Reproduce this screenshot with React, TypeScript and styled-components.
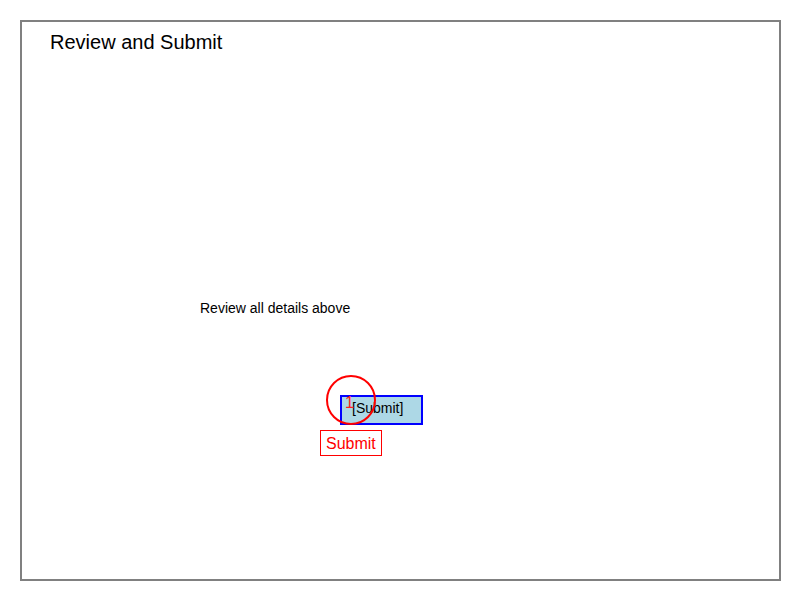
import React from "react";
import styled, { createGlobalStyle } from "styled-components";

const Global = createGlobalStyle`
  html, body { margin: 0; padding: 0; background: #ffffff; }
  body { font-family: "Liberation Sans", Arial, sans-serif; color: #000; }
`;

const Frame = styled.div`
  box-sizing: border-box;
  width: 761px;
  height: 561px;
  margin: 20px;
  border: 2px solid #808080;
  display: flex;
  flex-direction: column;
  align-items: flex-start;
`;

const Title = styled.h1`
  margin: 0;
  padding: 9px 28px 0;
  font-size: 20px;
  font-weight: normal;
  line-height: 23px;
`;

const Note = styled.p`
  margin: 246px 0 0 178px;
  font-size: 14px;
  line-height: 16px;
`;

const ActionArea = styled.div`
  margin: 79px 0 0 318px;
  position: relative;
`;

const SubmitButton = styled.button`
  box-sizing: border-box;
  width: 83px;
  height: 30px;
  padding: 0 0 4px 10px;
  border: 2px solid #0000ff;
  background: #add8e6;
  font-family: "Liberation Sans", Arial, sans-serif;
  font-size: 14px;
  color: #000;
  text-align: left;
  display: block;
`;

const Ring = styled.div`
  position: absolute;
  box-sizing: border-box;
  left: -14px;
  top: -20px;
  width: 50px;
  height: 50px;
  border: 2px solid #ff0000;
  border-radius: 50%;
  pointer-events: none;
`;

const Marker = styled.span`
  position: absolute;
  z-index: 2;
  left: 5px;
  top: -1px;
  font-size: 16px;
  line-height: 18px;
  color: #ff2020;
`;

const Label = styled.span`
  position: absolute;
  left: -20px;
  top: 35px;
  box-sizing: border-box;
  padding: 4px 5px 2px;
  border: 1px solid #ff0000;
  font-size: 16px;
  line-height: 18px;
  color: #ff0000;
  background: #ffffff;
  white-space: nowrap;
`;

export default function App() {
  return (
    <>
      <Global />
      <Frame>
        <Title>Review and Submit</Title>
        <Note>Review all details above</Note>
        <ActionArea>
          <SubmitButton>[Submit]</SubmitButton>
          <Ring />
          <Marker>1</Marker>
          <Label>Submit</Label>
        </ActionArea>
      </Frame>
    </>
  );
}
